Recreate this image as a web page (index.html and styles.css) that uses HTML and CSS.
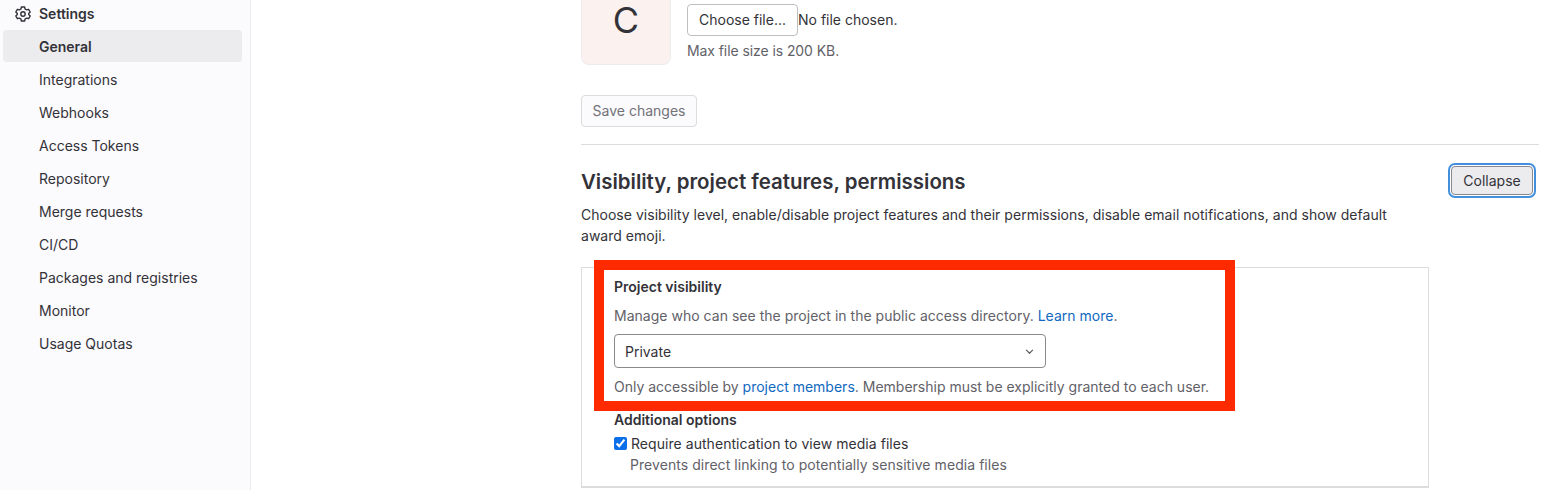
FILE: index.html
```html
<!DOCTYPE html>
<html lang="en">
<head>
<meta charset="utf-8">
<title>General settings</title>
<link rel="stylesheet" href="styles.css">
</head>
<body>
<div class="page">
  <aside class="sidebar">
    <div class="side-head">
      <svg class="gear" viewBox="0 0 16 16" width="16" height="16" fill="none" stroke="#333238" stroke-width="1.4" stroke-linejoin="round"><path d="M6.400 1h3.200l.5 2 1.500.9 2-.6 1.600 2.700-1.500 1.400v1.200l1.500 1.400-1.600 2.700-2-.6-1.500.9-.5 2H6.400l-.5-2-1.500-.9-2 .6L.8 10l1.500-1.400V7.400L.8 6l1.600-2.700 2 .6 1.500-.9z"/><circle cx="8" cy="8" r="2.200"/></svg>
      <span>Settings</span>
    </div>
    <nav class="side-nav">
      <a class="side-item active">General</a>
      <a class="side-item">Integrations</a>
      <a class="side-item">Webhooks</a>
      <a class="side-item">Access Tokens</a>
      <a class="side-item">Repository</a>
      <a class="side-item">Merge requests</a>
      <a class="side-item">CI/CD</a>
      <a class="side-item">Packages and registries</a>
      <a class="side-item">Monitor</a>
      <a class="side-item">Usage Quotas</a>
    </nav>
  </aside>
  <main class="main">
    <div class="avatar-row">
      <div class="avatar">C</div>
      <div class="upload">
        <div class="file-row">
          <button class="btn file-btn">Choose file...</button>
          <span class="file-name">No file chosen.</span>
        </div>
        <p class="hint">Max file size is 200 KB.</p>
      </div>
    </div>
    <button class="btn save-btn">Save changes</button>
    <hr class="rule">
    <section class="section">
      <div class="section-head">
        <div class="section-text">
          <h2 class="title">Visibility, project features, permissions</h2>
          <p class="desc">Choose visibility level, enable/disable project features and their permissions, disable email notifications, and show default award emoji.</p>
        </div>
        <button class="btn collapse-btn">Collapse</button>
      </div>
      <div class="card">
        <div class="card-body">
          <div class="label">Project visibility</div>
          <p class="help">Manage who can see the project in the public access directory. <a class="link">Learn more</a>.</p>
          <div class="select">
            <span>Private</span>
            <svg viewBox="0 0 16 16" width="11" height="11" fill="none" stroke="#626168" stroke-width="1.800" stroke-linecap="round" stroke-linejoin="round"><path d="M3.500 6l4.500 4.500L12.500 6"/></svg>
          </div>
          <p class="note">Only accessible by <a class="link">project members</a>. Membership must be explicitly granted to each user.</p>
          <div class="label options">Additional options</div>
          <label class="check"><input type="checkbox" checked> Require authentication to view media files</label>
          <p class="check-help">Prevents direct linking to potentially sensitive media files</p>
        </div>
      </div>
    </section>
  </main>
  <div class="highlight"></div>
</div>
</body>
</html>
```
FILE: styles.css
```css
* { box-sizing: border-box; }
html, body { margin: 0; height: 490px; overflow: hidden; background: #fff; }
body { font-family: Inter, "Liberation Sans", sans-serif; font-size: 14px; color: #333238; }
p { margin: 0; }

.page { display: flex; height: 490px; position: relative; overflow: hidden; }

.sidebar { width: 251px; flex: none; background: #fbfafd; border-right: 1px solid #ececef; padding: 0 8px 0 3px; }
.side-head { display: flex; align-items: center; gap: 8px; height: 28px; padding-left: 12px; font-weight: 600; margin-bottom: 2px; }
.side-head span { margin-top: -2px; }
.gear { flex: none; }
.side-nav { display: flex; flex-direction: column; gap: 1px; }
.side-item { display: flex; align-items: center; height: 32px; padding-left: 36px; border-radius: 4px; color: #333238; }
.side-item.active { background: #ececef; font-weight: 600; }

.main { flex: 1; min-width: 0; padding: 0 18px 0 330px; }

.avatar-row { display: flex; gap: 16px; height: 65px; }
.avatar { width: 90px; height: 65px; background: #fbf1ee; border: 1px solid #ececef; border-top: 0; border-radius: 0 0 8px 8px; display: flex; align-items: center; justify-content: center; font-size: 36px; line-height: 36px; padding-bottom: 24px; color: #333238; }
.upload { display: flex; flex-direction: column; padding-top: 4px; }
.file-row { display: flex; align-items: center; }
.btn { font-family: inherit; font-size: 14px; border-radius: 4px; background: #fff; color: #333238; height: 32px; margin: 0; }
.file-btn { width: 111px; padding: 0 0 2px; border: 1px solid #bfbfc3; }
.file-name { color: #333238; padding-bottom: 2px; }
.hint { color: #626168; margin-top: 5px; line-height: 20px; letter-spacing: -.08px; }

.save-btn { display: block; margin-top: 30px; width: 116px; padding: 0 0 2px; background: #fbfafd; border: 1px solid #dcdcde; color: #737278; }
.rule { margin: 17px 0 0; border: 0; border-top: 1px solid #dcdcde; }

.section { padding-top: 19px; }
.section-head { display: flex; justify-content: space-between; align-items: flex-start; }
.section-text { width: 848px; }
.title { margin: 0; font-size: 20.450px; line-height: 36px; font-weight: 600; color: #333238; }
.desc { margin-top: 4px; line-height: 21px; letter-spacing: .02px; }
.collapse-btn { width: 82px; padding: 0; margin: 2px 6px 0 0; background: #ececef; border: 1px solid #89888d; box-shadow: 0 0 0 1px #fff, 0 0 0 3px #428fdc; height: 29px; }

.card { width: 848px; margin-top: 21px; border: 1px solid #dcdcde; border-bottom-width: 2px; height: 221px; background: #fff; }
.card-body { padding: 10px 32px; }
.label { font-weight: 600; line-height: 18px; }
.help { margin-top: 11px; line-height: 18px; color: #626168; letter-spacing: .02px; }
.link { color: #1068bf; }
.select { display: flex; align-items: center; justify-content: space-between; width: 432px; height: 34px; margin-top: 9px; padding: 0 10px; border: 1px solid #89888d; border-radius: 4px; background: #fff; }
.note { margin-top: 10px; line-height: 18px; color: #626168; }
.options { margin-top: 15px; }
.check { display: flex; align-items: center; gap: 4px; margin-top: 6px; line-height: 18px; color: #333238; letter-spacing: .05px; }
.check input { margin: 0; width: 13px; height: 13px; accent-color: #0a6fe8; position: relative; top: -1px; }
.check-help { margin-top: 3px; padding-left: 16px; line-height: 18px; color: #626168; letter-spacing: .06px; }

.highlight { position: absolute; left: 594px; top: 260px; width: 641px; height: 151px; border: 10px solid #ff2a00; }
```
